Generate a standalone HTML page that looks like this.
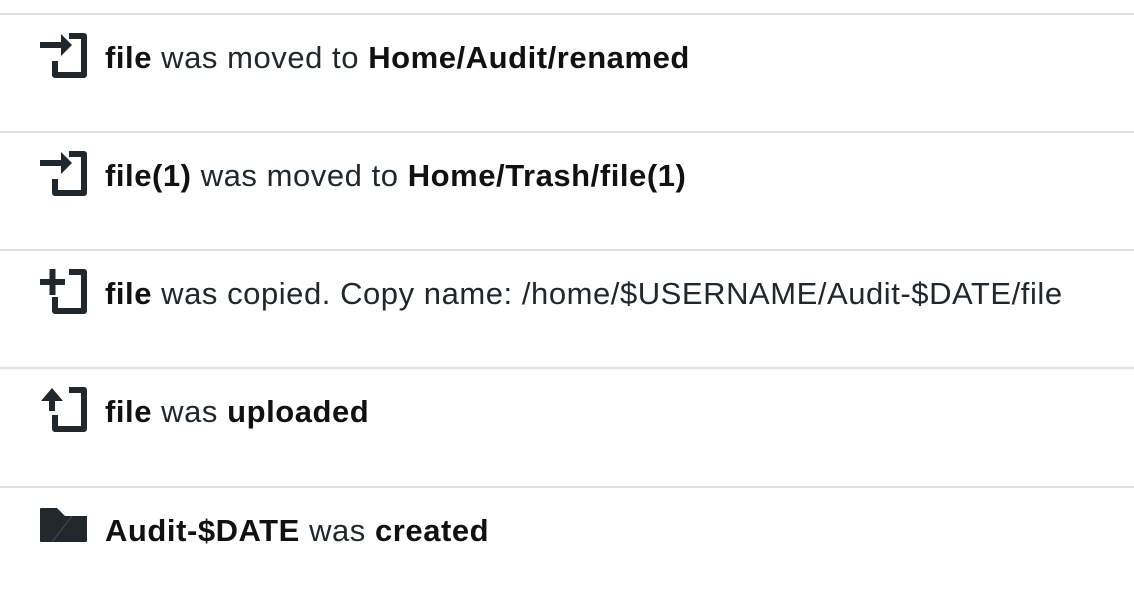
<!DOCTYPE html>
<html><head><meta charset="utf-8"><style>
body{margin:0;width:1134px;height:584px;background:#fff;overflow:hidden;font-family:"Liberation Sans",sans-serif;}
.row{position:absolute;left:0;width:1134px;height:118px;border-top:2px solid #e0e0e0;}
svg{position:absolute;left:40px;top:18px;}
.t{position:absolute;left:105px;top:25px;font-size:31px;color:#21272a;white-space:nowrap;letter-spacing:0.55px}
b{color:#111;font-weight:bold}
</style></head><body>
<div class="row" style="top:13px">
<svg width="48" height="48" viewBox="0 0 48 48"><path d="M29 3H44V42H15V28" fill="none" stroke="#21272a" stroke-width="6" stroke-linejoin="round"/><path d="M0 9H21V1L32 12L21 23V15H0Z" fill="#21272a"/></svg>
<div class="t"><b>file</b> was moved to <b>Home/Audit/renamed</b></div></div>
<div class="row" style="top:131px">
<svg width="48" height="48" viewBox="0 0 48 48"><path d="M29 3H44V42H15V28" fill="none" stroke="#21272a" stroke-width="6" stroke-linejoin="round"/><path d="M0 9H21V1L32 12L21 23V15H0Z" fill="#21272a"/></svg>
<div class="t"><b>file(1)</b> was moved to <b>Home/Trash/file(1)</b></div></div>
<div class="row" style="top:249px">
<svg width="48" height="48" viewBox="0 0 48 48"><path d="M29 3H44V42H15V28" fill="none" stroke="#21272a" stroke-width="6" stroke-linejoin="round"/><path d="M0 13H25M12.5 0V26" fill="none" stroke="#21272a" stroke-width="6"/></svg>
<div class="t"><b>file</b> was copied. Copy name: /home/$USERNAME/Audit-$DATE/file</div></div>
<div class="row" style="top:367px">
<svg width="48" height="48" viewBox="0 0 48 48"><path d="M29 3H44V42H15V28" fill="none" stroke="#21272a" stroke-width="6" stroke-linejoin="round"/><path d="M9 24V14H1L12 1L23 14H15V24Z" fill="#21272a"/></svg>
<div class="t"><b>file</b> was <b>uploaded</b></div></div>
<div class="row" style="top:486px">
<svg width="48" height="48" viewBox="0 0 48 48"><path d="M1 2H17L25 10H47V35Q47 36 46 36H1Q0 36 0 35V3Q0 2 1 2Z" fill="#21272a"/><path d="M32 10L12 36" stroke="#4a5257" stroke-width="1"/></svg>
<div class="t"><b>Audit-$DATE</b> was <b>created</b></div></div>
</body></html>
